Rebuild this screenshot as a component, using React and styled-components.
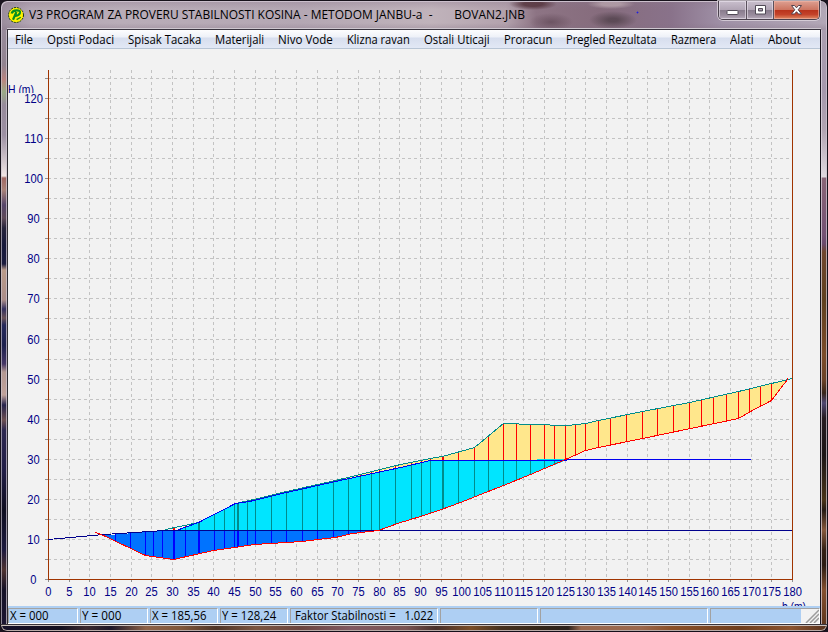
import React, { useLayoutEffect, useRef, useState } from "react";
import styled, { createGlobalStyle } from "styled-components";

const GlobalStyle = createGlobalStyle`
  html, body { margin: 0; padding: 0; overflow: hidden; background: #1b1420; }
  * { box-sizing: border-box; }
`;

const uiFont = `"Open Sans", "Noto Sans", sans-serif`;

const Window = styled.div`
  width: 828px;
  height: 632px;
  display: grid;
  grid-template-columns: 8px 812px 8px;
  grid-template-rows: 30px 594px 8px;
  font-family: ${uiFont};
  font-size: 12px;
  color: #000;
  overflow: hidden;
  background: #1b1420;
`;

const TitleBar = styled.header`
  grid-column: 1 / 4;
  display: flex;
  align-items: flex-start;
  padding: 0 7px 0 8px;
  border-radius: 7px 7px 0 0;
  border-top: 1px solid #17121b;
  border-left: 1px solid #17121b;
  border-right: 1px solid #17121b;
  box-shadow: inset 1px 1px 0 #cbbfcc, inset -1px 0 0 #cbbfcc;
  background:
    linear-gradient(to bottom, transparent 27px, #cfc8d0 27px, #cfc8d0 28px, #3a3540 28px) 6px 0 / 814px 100% no-repeat,
    radial-gradient(circle at 636.500px 11.500px, #2020e0 0.700px, transparent 1.200px),
    radial-gradient(ellipse 24px 9px at 612px 19px, rgba(82, 66, 76, 0.8) 20%, transparent),
    radial-gradient(ellipse 24px 5px at 610px 3px, rgba(190, 170, 178, 0.7) 40%, transparent),
    radial-gradient(ellipse 22px 9px at 550px 21px, rgba(92, 68, 82, 0.65), transparent),
    radial-gradient(ellipse 24px 6px at 532px 3px, rgba(86, 53, 62, 0.85) 40%, transparent),
    linear-gradient(to bottom, rgba(140, 120, 140, 0.35) 0, transparent 8px, transparent 22px, rgba(130, 110, 130, 0.3) 28px),
    linear-gradient(to right, #9a8c9c 0, #b3a6b3 30px, #b9adb8 120px, #b4a7b3 300px, #c0b3bb 430px, #b3a2ad 505px,
      #8d7484 535px, #866c7d 600px, #89728a 670px, #9f90a6 720px, #b3a8b7 100%);
`;

const AppIcon = styled.svg`
  width: 16px;
  height: 16px;
  margin: 6px 0 0 -1px;
  flex: none;
`;

const Title = styled.h1`
  margin: 5px 0 0 5px;
  font-size: 12px;
  line-height: 17px;
  font-weight: 400;
  flex: 1;
  white-space: pre;
`;

const WindowControls = styled.div`
  display: flex;
  width: 102px;
  height: 19px;
  border: 1px solid #4b424e;
  border-top: 0;
  border-radius: 0 0 5px 5px;
  box-shadow: 0 0 0 1px rgba(225, 218, 226, 0.75);
  overflow: hidden;
  flex: none;
`;

const ControlButton = styled.button`
  width: ${(p) => p.$width}px;
  height: 18px;
  padding: 0;
  border: 0;
  border-right: ${(p) => (p.$close ? "0" : "1px solid #5a505c")};
  display: flex;
  flex: none;
  align-items: center;
  justify-content: center;
  box-shadow: inset 0 0 0 1px ${(p) => (p.$close ? "rgba(240,180,165,.65)" : "rgba(235,228,238,.6)")};
  background: ${(p) =>
    p.$close
      ? "linear-gradient(to bottom, #dda092 0, #cd7561 48%, #b8321b 50%, #c4432a 75%, #df8a64 100%)"
      : "linear-gradient(to bottom, #c9bfcd 0, #b1a5b5 48%, #877b8c 50%, #9b8e9f 80%, #b6abba 100%)"};
`;

const Side = styled.div`
  border-left: 1px solid #17121b;
  border-right: 1px solid ${(p) => (p.$right ? "#17121b" : "#2c2a30")};
  box-shadow: inset 1px 0 0 rgba(${(p) => (p.$right ? "225,218,228,.7" : "205,198,208,.65")}),
    inset -1px 0 0 rgba(205, 198, 208, 0.75);
  background: ${(p) =>
    p.$right
      ? `linear-gradient(to bottom, #aa9eb0 0, #a598ac 60px, #b1a4b2 100px, #e0d8df 147px, #8a6577 148px,
         #745273 205px, #6a4a6b 214px, #70462e 222px, #60401f 270px, #7c4b29 325px, #6b4228 350px, #382519 363px,
         #504770 373px, #261b20 388px, #1b1416 425px, #493419 470px, #251a14 480px, #86583c 500px, #332015 520px,
         #2b1a12 535px, #85502f 560px, #5e351c 594px)`
      : `linear-gradient(to bottom, #978b9b 0, #91838f 35px, #ba8580 50px, #9aaa87 62px, #978b9b 75px, #9c90a2 105px,
         #f0e6e5 146px, #a16964 148px, #a98379 160px, #56466a 175px, #5f4b59 188px, #26243b 198px, #17193b 215px,
         #1b1c3e 234px, #ba9b89 240px, #aa8d89 270px, #34315f 279px, #6a5358 288px, #26295a 295px, #1c204d 315px,
         #463766 334px, #b39892 342px, #c0a29b 365px, #27244d 375px, #6d5052 390px, #2d2850 400px, #211d46 440px,
         #0f0e20 480px, #1d1a3e 520px, #4e3331 540px, #141126 560px, #1b1532 594px)`};
`;

const BottomFrame = styled.footer`
  grid-column: 1 / 4;
  border: 1px solid #15101a;
  border-top-color: #39343b;
  border-radius: 0 0 7px 7px;
  box-shadow: inset 0 -1px 0 #b7aaa6, inset 0 1px 0 #c9c0bc, inset 1px 0 0 #a99ea4, inset -1px 0 0 #c5b0a4;
  background: linear-gradient(to right, #15102a 0, #14101f 60px, #3b2a30 85px, #1e1728 110px, #8d6248 145px, #80583c 180px,
    #4f3527 215px, #7b5641 255px, #6b4540 300px, #805963 350px, #795453 405px, #48302b 435px, #7a4d27 470px,
    #46311f 500px, #352619 540px, #2c211b 567px, #99694f 580px, #9b684d 640px, #8b5129 670px, #6f3e1d 740px, #8b5430 790px, #54301d 828px);
`;

const Client = styled.main`
  display: grid;
  grid-template-rows: 19px 557px 18px;
  background: #f2f2f2;
`;

const MenuBar = styled.nav`
  display: flex;
  background: linear-gradient(to bottom, #fdfdfe 0, #eef1f8 7px, #d7deee 8px, #e2e8f5 18px);
  border-bottom: 1px solid #b8c5d5;
`;

const MenuItem = styled.button`
  width: ${(p) => p.$width + 14}px;
  height: 18px;
  padding: 2px 0 0 7px;
  border: 0;
  background: none;
  font: 12px/16px ${uiFont};
  color: #000;
  text-align: left;
  white-space: nowrap;
  flex: none;
`;

const Chart = styled.svg`
  display: block;
  width: 812px;
  height: 557px;
  background: #f2f2f2;
  shape-rendering: crispEdges;
`;

const AxisLabel = styled.text`
  font-family: "Liberation Sans", Arial, sans-serif;
  font-size: 12px;
  fill: #000086;
`;

const StatusBar = styled.section`
  display: flex;
  gap: 2px;
  padding-top: 2px;
  background: #aecff3;
  border-bottom: 1px solid #fff;
`;

const StatusPanel = styled.div`
  width: ${(p) => p.$width}px;
  height: 15px;
  padding-left: ${(p) => p.$indent ?? 1}px;
  border-top: 1px solid #a2a2a2;
  border-left: 1px solid #a2a2a2;
  border-right: 1px solid #fff;
  line-height: 14px;
  white-space: pre;
  flex: none;
`;

const GripPanel = styled(StatusPanel)`
  display: flex;
  justify-content: flex-end;
  padding: 0;
`;

const Grip = styled.svg`
  width: 18px;
  height: 14px;
  background: #f2f2f2;
  stroke: #9d9d9d;
  stroke-width: 1.5;
`;

const Fitted = styled.span`
  display: inline-block;
  white-space: pre;
  transform-origin: 0 50%;
`;

/* Condenses a label horizontally so that it fills a given width. */
function FitText({ width, children }) {
  const ref = useRef(null);
  const [scale, setScale] = useState(1);
  useLayoutEffect(() => {
    setScale(width / ref.current.offsetWidth);
  }, [width, children]);
  return (
    <Fitted ref={ref} style={{ transform: `scaleX(${scale})` }}>
      {children}
    </Fitted>
  );
}

const menu = [
  ["File", 18], ["Opsti Podaci", 67], ["Spisak Tacaka", 73], ["Materijali", 49],
  ["Nivo Vode", 55], ["Klizna ravan", 63], ["Ostali Uticaji", 66], ["Proracun", 48],
  ["Pregled Rezultata", 91], ["Razmera", 45], ["Alati", 24], ["About", 33],
];

const status = [
  { width: 70, text: "X = 000", fit: 39 },
  { width: 68, text: "Y = 000", fit: 39 },
  { width: 68, text: "X = 185,56", fit: 54 },
  { width: 68, text: "Y = 128,24", fit: 54 },
  { width: 148, text: "Faktor Stabilnosti =   1.022", fit: 138, indent: 4 },
  { width: 98 },
  { width: 168 },
];

const ORIGIN = { x: 48, y: 579 };
const px = (v) => Math.round(ORIGIN.x + (v * 744) / 180);
const py = (v) => Math.round(ORIGIN.y - (v * 481) / 120);
const range = (from, to, step) =>
  Array.from({ length: Math.floor((to - from) / step) + 1 }, (_, i) => from + i * step);

const WATER = 530;
const terrain = [
  [165, 529], [198, 522], [235, 503], [249, 500], [286, 491], [335, 480], [400, 464], [430, 458],
  [442, 456], [474, 447], [503, 423], [517, 423], [520, 424], [548, 424], [551, 425], [567, 425],
  [585, 423], [598, 420], [642, 411], [689, 402], [738, 391], [771, 383], [792, 378],
];
const phreatic = [
  [165, 530], [176, 530], [198, 522], [235, 503], [249, 501], [286, 492], [335, 481], [400, 467],
  [430, 460], [565, 460], [567, 459], [750, 459],
];
const slip = [
  [95, 532], [103, 535], [145, 555], [173, 559], [213, 550], [234, 547], [254, 544], [286, 542],
  [302, 541], [317, 539], [335, 537], [352, 533], [378, 530], [397, 523], [420, 516], [441, 509],
  [460, 502], [475, 496], [503, 485], [530, 474], [565, 459], [585, 450], [598, 447], [642, 438],
  [690, 428], [738, 418], [750, 411], [771, 400], [780, 388], [787, 379], [787, 377],
];
const slices = [
  115, 130, 145, 153, 162, 173, 185, 198, 214, 224, 234, 237, 247, 255, 271, 286, 302, 317, 333, 348,
  360, 371, 379, 395, 411, 421, 430, 442, 458, 474, 488, 503, 516, 530, 544, 554, 565, 575, 585, 598,
  610, 626, 642, 657, 673, 689, 701, 713, 726, 738, 749, 760, 771,
];
const thick = new Set([173, 198, 237, 442]);

const at = (line, x) => {
  for (let i = 1; i < line.length; i++) {
    const [x0, y0] = line[i - 1];
    const [x1, y1] = line[i];
    if (x <= x1) return Math.round(y0 + ((y1 - y0) * (x - x0)) / (x1 - x0 || 1));
  }
  return line[line.length - 1][1];
};
const pts = (line) => line.map(([x, y]) => `${x + 0.5},${y + 0.5}`).join(" ");
const between = (line, a, b) => line.filter(([x]) => x >= a && x <= b);

const blueZone = [[103, 535], [165, 530], [378, 530], ...between(slip, 104, 377).reverse()];
const cyanZone = [...between(phreatic, 176, 565), ...between(slip, 378, 564).reverse(), [378, 530]];
const sandZone = [...between(terrain, 400, 771), [786, 380], ...between(slip, 565, 780).reverse(), [565, 460], [430, 460], [400, 467]];
const sandStrip = [...between(terrain, 235, 400), [400, 466], [335, 481], [286, 492], [235, 504]];

function Slice({ x }) {
  const w = thick.has(x) ? 2 : 1;
  const bottom = at(slip, x);
  const top = x > 165 ? at(terrain, x) : WATER;
  const mid = x > 175 ? at(phreatic, x) : WATER;
  const waterTop = x < 165 ? Math.round(535 - ((x - 103) * 5) / 62) : WATER;
  return (
    <g>
      {x >= 173 && (
        <rect x={x} y={top} width={w} height={Math.max(0, Math.min(mid, bottom) - top)} fill="#ff0000" />
      )}
      {x > 175 && x < 565 && (
        <rect x={x} y={mid} width={w} height={Math.max(0, Math.min(bottom, WATER) - mid)} fill="#008c8c" />
      )}
      {x < 378 && <rect x={x} y={waterTop} width={w} height={Math.max(0, bottom - waterTop)} fill="#0000ff" />}
    </g>
  );
}

function SlopeChart() {
  return (
    <Chart viewBox="8 49 812 557">
      <defs>
        <clipPath id="hClip"><rect x="8" y="80" width="40" height="13" /></clipPath>
      </defs>
      <g stroke="#c3c3c3" strokeDasharray="3 3">
        {range(5, 175, 5).map((v) => (
          <line key={v} x1={px(v) + 0.5} x2={px(v) + 0.5} y1="70" y2="579" />
        ))}
        {range(5, 125, 5).map((v) => (
          <line key={v} x1="48" x2="791" y1={py(v) + 0.5} y2={py(v) + 0.5} />
        ))}
      </g>
      <g stroke="#909090">
        {range(0, 125, 5).map((v) => (
          <line key={v} x1="45" x2="48" y1={py(v) + 0.5} y2={py(v) + 0.5} />
        ))}
        {range(0, 180, 5).map((v) => (
          <line key={v} x1={px(v) + 0.5} x2={px(v) + 0.5} y1="579" y2="582" />
        ))}
      </g>
      <path d="M48.5 70V579.5H792.5V70" fill="none" stroke="#a03400" />

      <polygon points={pts(sandStrip)} fill="#ffe78c" />
      <polygon points={pts(sandZone)} fill="#ffe78c" />
      <polygon points={pts(cyanZone)} fill="#00e5ff" />
      <polygon points={pts(blueZone)} fill="#0073ff" />
      {slices.map((x) => <Slice key={x} x={x} />)}
      <g fill="none">
        <polyline points={pts(terrain)} stroke="#008c8c" />
        <polyline points={pts(phreatic)} stroke="#0000f0" />
        <rect x="537" y="459" width="27" height="1" fill="#00d8f0" />
        <polyline points="48,539.5 104,534.5 165,530.5 792,530.5" stroke="#00008c" />
        <polyline points={pts(slip)} stroke="#ff0000" />
      </g>

      {range(0, 120, 10).map((v) => (
        <AxisLabel key={v} x={33.5 - String(v).length * 3 - 0.2} y={py(v) + 5} textLength={String(v).length * 6.2} lengthAdjust="spacingAndGlyphs">
          {v}
        </AxisLabel>
      ))}
      {range(0, 180, 5).map((v) => (
        <AxisLabel key={v} x={px(v) + 0.3 - String(v).length * 3} y="596" textLength={String(v).length * 6.2} lengthAdjust="spacingAndGlyphs">
          {v}
        </AxisLabel>
      ))}
      <AxisLabel x="8" y="94" textLength="26" lengthAdjust="spacingAndGlyphs" clipPath="url(#hClip)">H (m)</AxisLabel>
      <AxisLabel x="782" y="611" textLength="24" lengthAdjust="spacingAndGlyphs">b (m)</AxisLabel>
    </Chart>
  );
}

export default function App() {
  return (
    <>
      <GlobalStyle />
      <Window>
        <TitleBar>
          <AppIcon viewBox="0 0 16 16">
            <circle cx="8" cy="8" r="7.5" fill="#fff200" stroke="#12380c" strokeDasharray="2 1" />
            <path d="M3.600 6.500Q4.500 3.500 8.500 3.300Q12.600 3.200 11.900 6Q11.200 8.500 7.500 8.900M8.400 5L5 12.800" fill="none" stroke="#069020" strokeWidth="2.200" />
            <path d="M8.600 12.600L12.800 10.200" stroke="#069020" strokeWidth="1.300" />
          </AppIcon>
          <Title><FitText width={496}>{"V3 PROGRAM ZA PROVERU STABILNOSTI KOSINA - METODOM JANBU-a  -       BOVAN2.JNB"}</FitText></Title>
          <WindowControls>
            <ControlButton $width={28} aria-label="Minimize">
              <svg width="13" height="12"><rect x="1" y="6.5" width="11" height="4" rx=".7" fill="#fff" stroke="#514b57" /></svg>
            </ControlButton>
            <ControlButton $width={27} aria-label="Maximize">
              <svg width="13" height="12">
                <path fillRule="evenodd" d="M1.5 1.5h10v8.500h-10zM4.500 4.500v2.500h4v-2.500z" fill="#fff" stroke="#514b57" />
              </svg>
            </ControlButton>
            <ControlButton $width={45} $close aria-label="Close">
              <svg width="13" height="12">
                <path d="M1.5 1.500h3l2 2.300 2-2.300h3l-3.300 4.300 3.300 4.200h-3l-2-2.300-2 2.300h-3l3.300-4.200z" fill="#fff" stroke="#55424c" />
              </svg>
            </ControlButton>
          </WindowControls>
        </TitleBar>
        <Side />
        <Client>
          <MenuBar>
            {menu.map(([label, width]) => (
              <MenuItem key={label} $width={width}><FitText width={width}>{label}</FitText></MenuItem>
            ))}
          </MenuBar>
          <SlopeChart />
          <StatusBar>
            {status.map((s, i) => (
              <StatusPanel key={i} $width={s.width} $indent={s.indent}>
                {s.text && <FitText width={s.fit}>{s.text}</FitText>}
              </StatusPanel>
            ))}
            <GripPanel $width={110}>
              <Grip viewBox="0 0 18 14">
                <path d="M5 14L18 1M9 14L18 5M13 14L18 9" fill="none" />
              </Grip>
            </GripPanel>
          </StatusBar>
        </Client>
        <Side $right />
        <BottomFrame />
      </Window>
    </>
  );
}
